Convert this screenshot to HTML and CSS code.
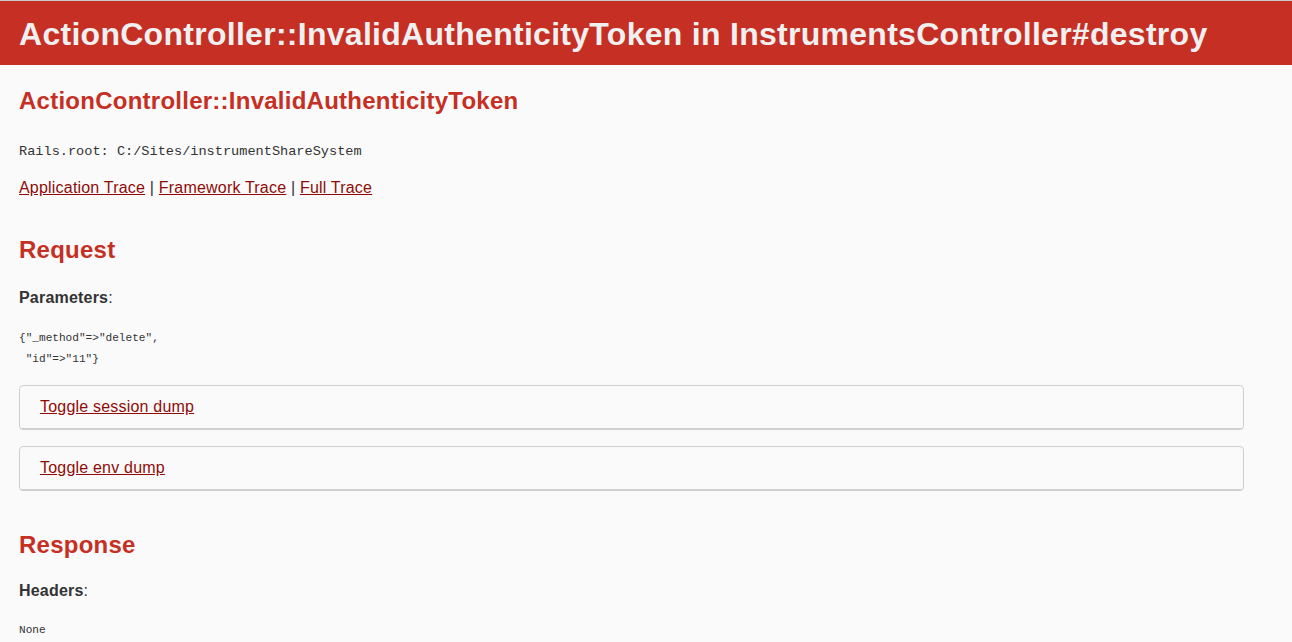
FILE: index.html
```html
<!DOCTYPE html>
<html>
<head>
<meta charset="utf-8">
<title>Action Controller: Exception caught</title>
<link rel="stylesheet" href="styles.css">
</head>
<body>
<header class="header">
  <h1 class="header-title">ActionController::InvalidAuthenticityToken in InstrumentsController#destroy</h1>
</header>
<div class="container">
  <h2 class="heading heading-first">ActionController::InvalidAuthenticityToken</h2>
  <p class="text root-line"><code class="root-code">Rails.root: C:/Sites/instrumentShareSystem</code></p>
  <p class="text trace-links"><a class="link" href="#">Application Trace</a> | <a class="link" href="#">Framework Trace</a> | <a class="link" href="#">Full Trace</a></p>
  <h2 class="heading heading-request">Request</h2>
  <p class="text label label-params"><b>Parameters</b>:</p>
  <pre class="dump dump-params">{"_method"=>"delete",
 "id"=>"11"}</pre>
  <div class="details details-session">
    <div class="summary"><a class="link" href="#">Toggle session dump</a></div>
  </div>
  <div class="details details-env">
    <div class="summary"><a class="link" href="#">Toggle env dump</a></div>
  </div>
  <h2 class="heading heading-response">Response</h2>
  <p class="text label label-headers"><b>Headers</b>:</p>
  <pre class="dump dump-headers">None</pre>
</div>
</body>
</html>
```

FILE: styles.css
```css
html, body {
  margin: 0;
  padding: 0;
}
body {
  background: #FAFAFA;
  color: #333;
  font-family: "Liberation Sans", Arial, Helvetica, sans-serif;
  font-size: 16px;
  line-height: 22px;
  letter-spacing: 0.2px;
  border-top: 1px solid #c9c9c9;
}
.header {
  background: #C52F24;
  color: #F0F0F0;
  padding: 15px 19px 13px;
}
.header-title {
  margin: 0;
  font-size: 32px;
  line-height: 36px;
  font-weight: bold;
  letter-spacing: 0.28px;
  white-space: nowrap;
}
.container {
  display: flex;
  flex-direction: column;
  align-items: flex-start;
  padding: 0 19px;
}
.heading {
  color: #C52F24;
  font-size: 24px;
  line-height: 30px;
  font-weight: bold;
  letter-spacing: 0.25px;
  margin: 0;
}
.heading-first { margin-top: 21px; }
.text { margin: 0; }
.root-line { margin-top: 23px; }
.root-code {
  font-family: "Liberation Mono", "Courier New", monospace;
  font-size: 13.6px;
  line-height: 1;
  letter-spacing: 0;
}
.trace-links { margin-top: 16px; }
.heading-request { margin-top: 36px; }
.label-params { margin-top: 22px; }
.dump {
  margin: 0;
  font-family: "Liberation Mono", "Courier New", monospace;
  font-size: 11.1px;
  line-height: 21px;
  letter-spacing: 0;
  white-space: pre-wrap;
}
.dump-params { margin-top: 19px; }
.details {
  box-sizing: border-box;
  width: 1225px;
  border: 1px solid #D0D0D0;
  border-radius: 4px;
}
.details-session { margin-top: 15px; }
.details-env { margin-top: 16px; }
.summary {
  padding: 10px 20px;
  border-bottom: 1px solid #D0D0D0;
}
.link {
  color: #8f0b08;
  text-decoration: underline;
}
.heading-response { margin-top: 39px; }
.label-headers { margin-top: 20px; }
.dump-headers { margin-top: 18px; }
```
